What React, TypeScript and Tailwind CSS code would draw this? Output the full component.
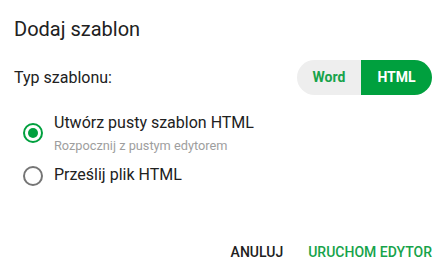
export default function App() {
  return (
    <div className="w-[446px] h-[280px] bg-white font-['Roboto',sans-serif] text-[#212121] flex flex-col">
      <h2 className="px-[14px] pt-[13px] text-[20px] leading-8 font-normal">Dodaj szablon</h2>

      <div className="mt-[15px] px-[14px] flex items-center justify-between">
        <span className="text-[16px] leading-6">Typ szablonu:</span>
        <div className="flex h-[35px] rounded-full overflow-hidden text-[14px] font-bold">
          <button className="w-[64px] bg-[#eeeeee] text-[#17a34a]">Word</button>
          <button className="w-[71px] bg-[#00a03e] text-white">HTML</button>
        </div>
      </div>

      <div className="mt-[17px] pl-[23px] flex flex-col">
        <label className="flex items-center gap-[11px] h-[42px]">
          <span className="w-[20px] h-[20px] rounded-full border-2 border-[#00a03e] flex items-center justify-center">
            <span className="w-[10px] h-[10px] rounded-full bg-[#00a03e]" />
          </span>
          <span className="flex flex-col">
            <span className="text-[16px] leading-5">Utwórz pusty szablon HTML</span>
            <span className="text-[12.75px] leading-4 mt-[5px] text-[#9e9e9e]">Rozpocznij z pustym edytorem</span>
          </span>
        </label>
        <label className="mt-[1px] flex items-center gap-[11px] h-[42px]">
          <span className="w-[20px] h-[20px] rounded-full border-2 border-[#757575]" />
          <span className="text-[16px] leading-5 -mt-[3px]">Prześlij plik HTML</span>
        </label>
      </div>

      <div className="mt-auto mb-[16px] pr-[14px] flex justify-end items-center gap-[25px] text-[14px] font-medium">
        <button className="h-[24px] uppercase text-[#212121]">Anuluj</button>
        <button className="h-[24px] uppercase text-[#17a34a]">Uruchom edytor</button>
      </div>
    </div>
  );
}
